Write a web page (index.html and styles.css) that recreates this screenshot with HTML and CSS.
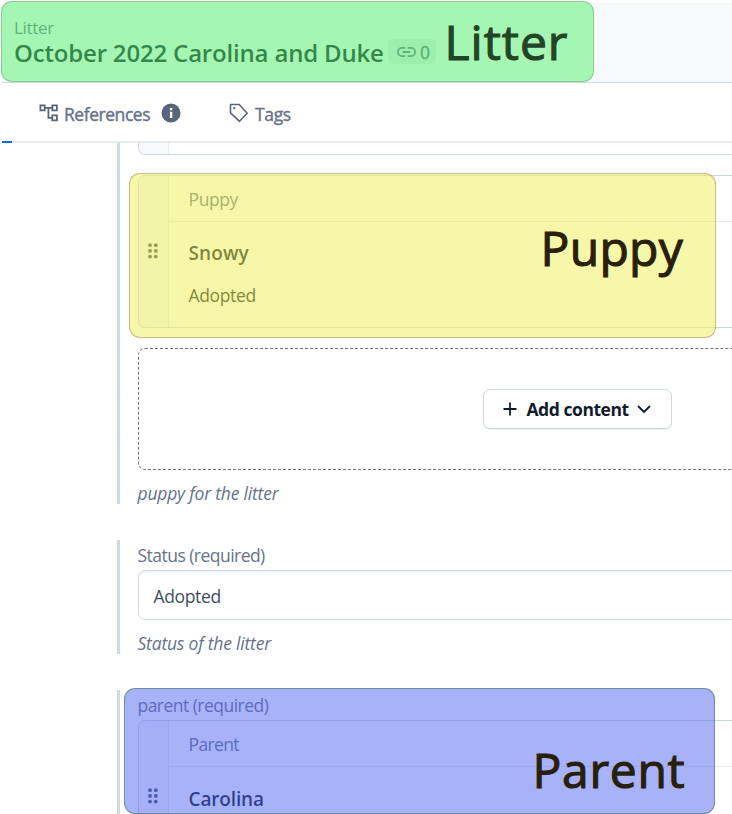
FILE: index.html
```html
<!DOCTYPE html>
<html lang="en">
<head>
<meta charset="utf-8">
<title>October 2022 Carolina and Duke</title>
<link rel="stylesheet" href="styles.css">
</head>
<body>
<div class="app">
  <header class="header">
    <div class="type"><span class="t-type">Litter</span></div>
    <div class="title-row">
      <h1 class="title">October 2022 Carolina and Duke</h1>
      <span class="links">
        <svg width="19" height="12" viewBox="0 0 19 12" fill="none" stroke="currentColor" stroke-width="1.8"><path d="M8.3 1.9H5a4.1 4.1 0 0 0 0 8.2h3.3M10.7 1.9H14a4.1 4.1 0 0 1 0 8.2h-3.3M5.7 6h7.6"/></svg>
        <span class="count">0</span>
      </span>
    </div>
  </header>
  <nav class="tabs">
    <div class="tab tab-refs">
      <svg width="20" height="20" viewBox="0 0 20 20" fill="none" stroke="currentColor" stroke-width="1.8"><path d="M1.4 2.4h4.3v5H1.4zM13.3 2.4h4.6v5h-4.6zM13.3 12.3h4.6v5h-4.6zM5.7 4.9h7.6M9.4 4.9v9.9h3.9"/></svg>
      <span class="t-refs">References</span>
      <svg class="info" width="20" height="20" viewBox="0 0 20 20"><circle cx="10" cy="10" r="9.5" fill="#5a657c"/><path d="M8.9 5h2.4v2.3H8.9zM8.9 8.8h2.4V15H8.9z" fill="#fff"/></svg>
    </div>
    <div class="tab tab-tags">
      <svg width="20" height="20" viewBox="0 0 20 20" fill="none" stroke="currentColor" stroke-width="1.6" stroke-linejoin="round"><path d="M1.5 1.5h8.7l8 8.8-7.7 8-9-8.5z"/><circle cx="5.2" cy="5.2" r="1.1" fill="currentColor" stroke="none"/></svg>
      <span class="t-tags">Tags</span>
    </div>
  </nav>
  <main class="fields">
    <section class="field field-puppy">
      <div class="card card-cut"><div class="handle"></div></div>
      <div class="card card-puppy">
        <div class="handle"><svg width="10" height="16" viewBox="0 0 10 16" fill="currentColor"><circle cx="2" cy="2.2" r="1.9"/><circle cx="7.8" cy="2.2" r="1.9"/><circle cx="2" cy="7.9" r="1.9"/><circle cx="7.8" cy="7.9" r="1.9"/><circle cx="2" cy="13.6" r="1.9"/><circle cx="7.8" cy="13.6" r="1.9"/></svg></div>
        <div class="body">
          <div class="card-type"><span class="t-puppy">Puppy</span></div>
          <div class="name"><span class="t-snowy">Snowy</span></div>
          <div class="desc"><span class="t-adopted">Adopted</span></div>
        </div>
      </div>
      <div class="dropzone">
        <button class="add">
          <svg width="14" height="14" viewBox="0 0 14 14" fill="none" stroke="currentColor" stroke-width="1.8"><path d="M7 .5v13M.5 7h13"/></svg>
          <span class="t-add">Add content</span>
          <svg class="chev" width="14" height="9" viewBox="0 0 14 9" fill="none" stroke="currentColor" stroke-width="1.8"><path d="M1 1l6 6 6-6"/></svg>
        </button>
      </div>
      <p class="help"><span class="t-help1">puppy for the litter</span></p>
    </section>
    <section class="field field-status">
      <div class="label"><span class="t-status">Status (required)</span></div>
      <div class="input"><span class="t-adopted">Adopted</span></div>
      <p class="help"><span class="t-help2">Status of the litter</span></p>
    </section>
    <section class="field field-parent">
      <div class="label"><span class="t-parent-label">parent (required)</span></div>
      <div class="card card-parent">
        <div class="handle"><svg width="10" height="16" viewBox="0 0 10 16" fill="currentColor"><circle cx="2" cy="2.2" r="1.9"/><circle cx="7.8" cy="2.2" r="1.9"/><circle cx="2" cy="7.9" r="1.9"/><circle cx="7.8" cy="7.9" r="1.9"/><circle cx="2" cy="13.6" r="1.9"/><circle cx="7.8" cy="13.6" r="1.9"/></svg></div>
        <div class="body">
          <div class="card-type"><span class="t-parent">Parent</span></div>
          <div class="name name-parent"><span class="t-carolina">Carolina</span></div>
        </div>
      </div>
    </section>
  </main>
  <div class="note note-litter"></div>
  <div class="note note-puppy"></div>
  <div class="note note-parent"></div>
  <div class="caption caption-litter">Litter</div>
  <div class="caption caption-puppy">Puppy</div>
  <div class="caption caption-parent">Parent</div>
</div>
</body>
</html>
```
FILE: styles.css
```css
* { box-sizing: border-box; }
body { margin: 0; background: #fff; font-family: "Open Sans", "Noto Sans", sans-serif; font-size: 17.5px; color: #67728a; }
.app { position: relative; width: 732px; height: 814px; overflow: hidden; padding: 3px 0 0 2px; white-space: nowrap; }
.header { height: 80px; background: #f7f9fa; border-bottom: 1px solid #cfd9e0; padding: 12px 0 0 12px; }
.type { height: 25px; line-height: 25px; font-size: 17px; letter-spacing: -0.3px; }
.title-row { display: flex; align-items: center; height: 26px; }
.title { margin: 0; width: 374px; font-size: 24px; font-weight: 600; line-height: 26px; color: #111b2b; letter-spacing: -0.18px; }
.links { display: flex; align-items: center; gap: 4px; width: 48px; height: 25px; padding-left: 9px; border-radius: 5px; background: #e7ebee; margin-top: -3px; }
.count { -webkit-text-stroke: 0.5px currentColor; }
.tabs { height: 60px; display: flex; align-items: center; padding: 1px 0 0 36px; border-bottom: 2px solid #e7ebee; position: relative; }
.tabs::after { content: ""; position: absolute; left: 0; bottom: -2px; width: 10px; height: 2px; background: #036fe3; }
.tab { display: flex; align-items: center; color: #67728a; height: 58px; -webkit-text-stroke: 0.4px currentColor; }
.tab > svg { color: #5a657c; margin-top: 1px; margin-left: 1px; }
.tab > .info { margin-left: 0; }
.tab > span { position: relative; top: 1px; }
.tab-refs { width: 190px; }
.t-refs { width: 97px; margin-left: 5px; letter-spacing: -0.45px; }
.t-tags { margin-left: 6px; letter-spacing: -0.35px; }
.fields { padding-left: 115px; }
.field { border-left: 3px solid #cfd9e0; padding-left: 18px; }
.field-puppy { height: 361px; margin-bottom: 36px; }
.field-status { height: 114px; margin-bottom: 36px; }
.field-parent { height: 130px; }
.card { display: flex; width: 640px; border: 1px solid #cfd9e0; border-radius: 7px; overflow: hidden; }
.handle { width: 30px; flex: none; background: #f7f9fa; border-right: 1px solid #e7ebee; display: flex; align-items: center; justify-content: center; color: #414d63; }
.handle svg { margin: -1px 1px 0 0; }
.body { flex: 1; }
.card-cut { height: 12px; border-top: 0; border-radius: 0 0 7px 7px; margin-bottom: 20px; }
.card-puppy { height: 153px; margin-bottom: 20px; }
.card-parent { height: 153px; }
.card-type { height: 46px; line-height: 47px; padding-left: 19.5px; border-bottom: 1px solid #e7ebee; }
.t-puppy { letter-spacing: -0.4px; }
.t-parent { letter-spacing: -0.65px; }
.t-adopted { letter-spacing: -0.35px; }
.name { height: 63px; line-height: 63px; padding-left: 19.5px; font-weight: 600; font-size: 19px; color: #111b2b; }
.name-parent { line-height: 65px; }
.t-snowy { letter-spacing: 0.1px; }
.t-carolina { letter-spacing: -0.15px; }
.desc { line-height: 20px; padding-left: 19.5px; color: #111b2b; }
.dropzone { width: 760px; height: 122px; border: 1px dashed #67728a; border-radius: 7px; padding: 40px 0 0 344px; }
.add { display: flex; align-items: center; width: 189px; height: 40px; padding: 0 0 0 19px; border: 1px solid #cfd9e0; border-radius: 7px; background: #fff; box-shadow: 0 1px 0 #edf0f3; font: 700 17.5px "Open Sans", sans-serif; color: #111b2b; }
.t-add { width: 110px; margin-left: 9.5px; margin-right: 0.5px; text-align: left; letter-spacing: -0.45px; }
.help { margin: 0; height: 34px; padding-top: 11px; line-height: 24px; font-style: italic; letter-spacing: -0.2px; text-indent: -0.5px; }
.label { height: 30px; line-height: 30px; letter-spacing: -0.53px; text-indent: -0.5px; }
.input { width: 640px; height: 50px; padding-left: 14.5px; border: 1px solid #cfd9e0; border-radius: 7px; box-shadow: inset 0 2px 0 #f3f6f8; line-height: 51px; color: #414d63; }
.note { position: absolute; border: 1px solid; border-radius: 11px; }
.note-litter { left: 1px; top: 1px; width: 593px; height: 81px; background: rgba(85,243,108,.5); border-color: rgba(65,100,65,.3); }
.note-puppy { left: 129px; top: 173px; width: 587px; height: 165px; background: rgba(237,239,83,.5); border-color: rgba(130,70,70,.35); }
.note-parent { left: 124px; top: 688px; width: 591px; height: 126px; background: rgba(81,101,243,.5); border-color: rgba(50,110,60,.5); }
.caption { position: absolute; font-size: 48px; line-height: 64px; color: #28200b; -webkit-text-stroke: 1.1px currentColor; }
.caption-litter { left: 444.5px; top: 10px; color: #214526; letter-spacing: 1px; }
.caption-puppy { left: 540.5px; top: 216px; letter-spacing: 0.3px; }
.caption-parent { left: 532.5px; top: 738px; letter-spacing: 0.7px; }
```
